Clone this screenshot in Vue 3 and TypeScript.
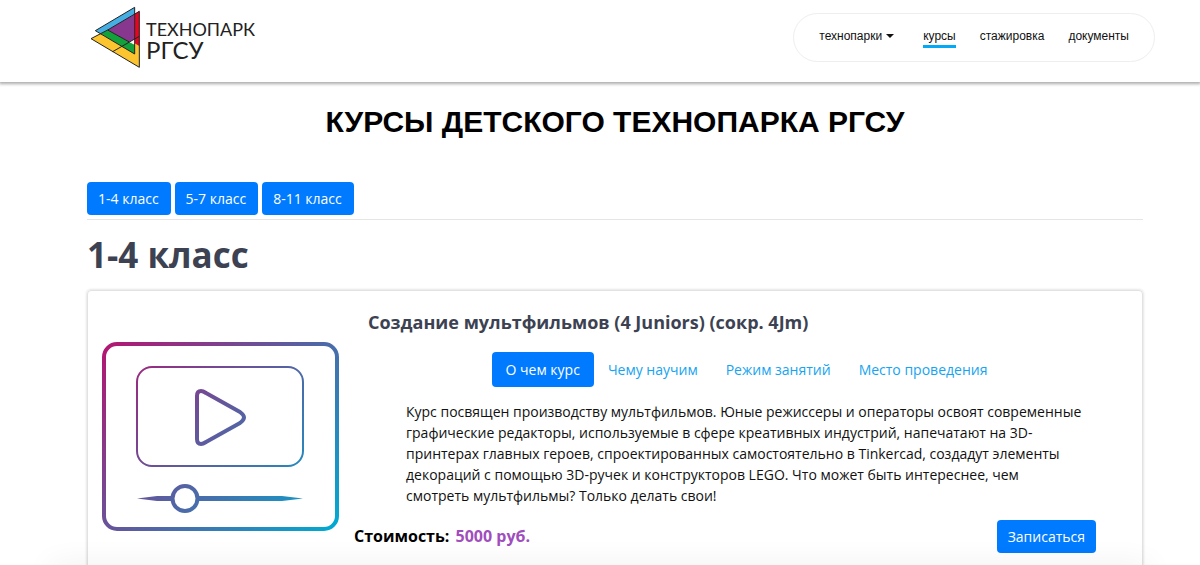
<script setup lang="ts">
import { ref } from 'vue'

const grades = ['1-4 класс', '5-7 класс', '8-11 класс']
const tabs = ['О чем курс', 'Чему научим', 'Режим занятий', 'Место проведения']
const activeTab = ref(0)
</script>

<template>
  <div class="page">
    <header class="header">
      <a class="logo" href="#" aria-label="Технопарк РГСУ">
        <svg class="logo-mark" viewBox="12 6 150 186" aria-hidden="true">
          <path d="M15 104 L65 76 L146 120 L160 97 V190 Z" fill="#fcc52f" />
          <path d="M28 80 L146 10 V32 L65 78 L45 89 Z" fill="#45aee3" />
          <path d="M45 89 L65 78 L130 114 L146 122 V150 Z" fill="#12a23c" />
          <path d="M146 31 L160 20 V126 L146 118 Z" fill="#e50520" />
          <path d="M65 78 L146 31 V106 L130 114 Z" fill="#87378e" />
          <path d="M130 114 L146 106 V122 Z" fill="#fff" />
          <g fill="none" stroke="#222" stroke-width="3" stroke-linejoin="round">
            <path d="M28 80 L146 10 V150 Z" />
            <path d="M65 78 L160 22 V190 L15 104 L65 78 L130 114" />
            <path d="M80 143 L160 97" />
          </g>
        </svg>
        <span class="logo-text"><span class="logo-top">ТЕХНОПАРК</span><span class="logo-bottom">РГСУ</span></span>
      </a>
      <nav class="nav">
        <button type="button" class="nav-item dropdown">технопарки<span class="caret"></span></button>
        <a class="nav-item current" href="#">курсы</a>
        <a class="nav-item" href="#">стажировка</a>
        <a class="nav-item" href="#">документы</a>
      </nav>
    </header>

    <main class="main">
      <h1>КУРСЫ ДЕТСКОГО ТЕХНОПАРКА РГСУ</h1>
      <div class="grades">
        <button v-for="g in grades" :key="g" type="button" class="btn">{{ g }}</button>
      </div>
      <h2>1-4 класс</h2>

      <article class="card">
        <svg class="picture" viewBox="0 0 237 189" fill="none" stroke="url(#brand)" aria-hidden="true">
          <defs>
            <linearGradient id="brand" gradientUnits="userSpaceOnUse" x1="10" y1="0" x2="227" y2="189">
              <stop offset="0" stop-color="#b01873" />
              <stop offset="0.5" stop-color="#5860a2" />
              <stop offset="1" stop-color="#02a8d1" />
            </linearGradient>
          </defs>
          <rect x="2" y="2" width="233" height="185" rx="13" stroke-width="4" />
          <rect x="35" y="25" width="166" height="99" rx="15" stroke-width="2" />
          <path d="M95 54 Q95 49 99 49 Q101 49 104 51 L138 70 Q142 73 142 75.500 Q142 78 138 81 L104 100 Q101 102 99 102 Q95 102 95 97 Z" stroke-width="4" stroke-linejoin="round" />
          <path d="M35 156.500 L55 154 H69 V159 H55 Z M97 154 H180 L201 156.500 L180 159 H97 Z" fill="url(#brand)" stroke="none" />
          <circle cx="83" cy="156.500" r="12.500" stroke-width="4" />
        </svg>
        <div class="content">
          <h3>Создание мультфильмов (4 Juniors) (сокр. 4Jm)</h3>
          <div class="tabs" role="tablist">
            <button
              v-for="(t, i) in tabs"
              :key="t"
              type="button"
              role="tab"
              class="tab"
              :class="{ active: i === activeTab }"
              :aria-selected="i === activeTab"
              @click="activeTab = i"
            >{{ t }}</button>
          </div>
          <p class="text">Курс посвящен производству мультфильмов. Юные режиссеры и операторы освоят современные графические редакторы, используемые в сфере креативных индустрий, напечатают на 3D-принтерах главных героев, спроектированных самостоятельно в Tinkercad, создадут элементы декораций с помощью 3D-ручек и конструкторов LEGO. Что может быть интереснее, чем смотреть мультфильмы? Только делать свои!</p>
          <div class="footer">
            <p class="price">Стоимость: <span>5000 руб.</span></p>
            <button type="button" class="btn">Записаться</button>
          </div>
        </div>
      </article>
    </main>
    <div class="fade" aria-hidden="true"></div>
  </div>
</template>

<style>
html {
  scrollbar-width: none;
}
body {
  margin: 0;
  background: #fff;
}
</style>

<style scoped>
* {
  box-sizing: border-box;
}
.page {
  font-family: "Open Sans", "Noto Sans", sans-serif;
  font-size: 14px;
  line-height: 21px;
  color: #111;
}
button {
  font: inherit;
  border: 0;
  cursor: pointer;
}
.header {
  display: flex;
  justify-content: space-between;
  align-items: flex-start;
  height: 82px;
  padding: 0 45px 0 90px;
  box-shadow: 0 1px 3px 1px rgba(0, 0, 0, 0.33);
}
.logo {
  display: flex;
  gap: 6px;
  padding-top: 6px;
  color: #222;
  text-decoration: none;
}
.logo-mark {
  width: 50px;
  height: 62px;
}
.logo-text {
  display: flex;
  flex-direction: column;
  padding-top: 12px;
  font-family: Lato, sans-serif;
}
.logo-top {
  font-size: 18px;
  line-height: 22px;
}
.logo-bottom {
  font-size: 24px;
  line-height: 20px;
}
.nav {
  display: flex;
  align-items: center;
  gap: 24px;
  height: 49px;
  margin-top: 13px;
  padding: 0 25px;
  border: 1px solid #eee;
  border-radius: 25px;
  font-family: "Liberation Sans", Arial, sans-serif;
  font-size: 12px;
}
.nav-item {
  padding: 0;
  background: none;
  color: #111;
  line-height: 18px;
  text-decoration: none;
  border-bottom: 3px solid transparent;
}
.current {
  border-bottom-color: #03a9f4;
}
.dropdown {
  display: flex;
  align-items: center;
  gap: 4px;
  margin-right: 5px;
}
.caret {
  border: 4px solid transparent;
  border-top-color: #111;
  border-bottom: 0;
}
.main {
  padding: 25px 57px 20px 87px;
}
h1 {
  margin: 0;
  color: #000;
  font-family: "Liberation Sans", Arial, sans-serif;
  font-size: 30px;
  line-height: 30px;
  text-align: center;
}
.grades {
  display: flex;
  gap: 4px;
  margin-top: 45px;
  padding-bottom: 4px;
  border-bottom: 1px solid #e5e5e5;
}
.btn {
  padding: 6px 11px;
  border-radius: 4px;
  background: #007bff;
  color: #fff;
}
.grades .btn {
  padding: 6px 12px 6px 11px;
}
h2 {
  margin: 13px 0;
  color: #3c4252;
  font-size: 35px;
  line-height: 44px;
}
.card {
  display: grid;
  grid-template-columns: 237px 1fr;
  gap: 15px;
  align-items: center;
  padding: 14px 3px 14px 14px;
  border: 1px solid #e2e2e2;
  border-radius: 4px;
  box-shadow: 0 0 3px rgba(0, 0, 0, 0.2);
}
.picture {
  width: 100%;
}
h3 {
  margin: 4px 14px 17px;
  color: #3c4252;
  font-size: 18px;
  line-height: 26px;
}
.tabs {
  display: flex;
  justify-content: center;
}
.tab {
  padding: 7px 14px;
  border-radius: 4px;
  background: none;
  color: #16a4f0;
}
.tab.active {
  background: #007bff;
  color: #fff;
}
.text {
  margin: 14px 56px 14px 52px;
}
.footer {
  display: flex;
  justify-content: space-between;
  align-items: center;
  padding: 0 43px 14px 0;
}
.price {
  margin: 0;
  color: #000;
  font-size: 16px;
  font-weight: 700;
}
.price span {
  margin-left: 2px;
  color: #a04dbd;
}
.fade {
  position: fixed;
  left: 50px;
  right: 50px;
  top: 100%;
  height: 20px;
  box-shadow: 0 0 30px rgba(0, 0, 0, 0.07);
}
</style>
